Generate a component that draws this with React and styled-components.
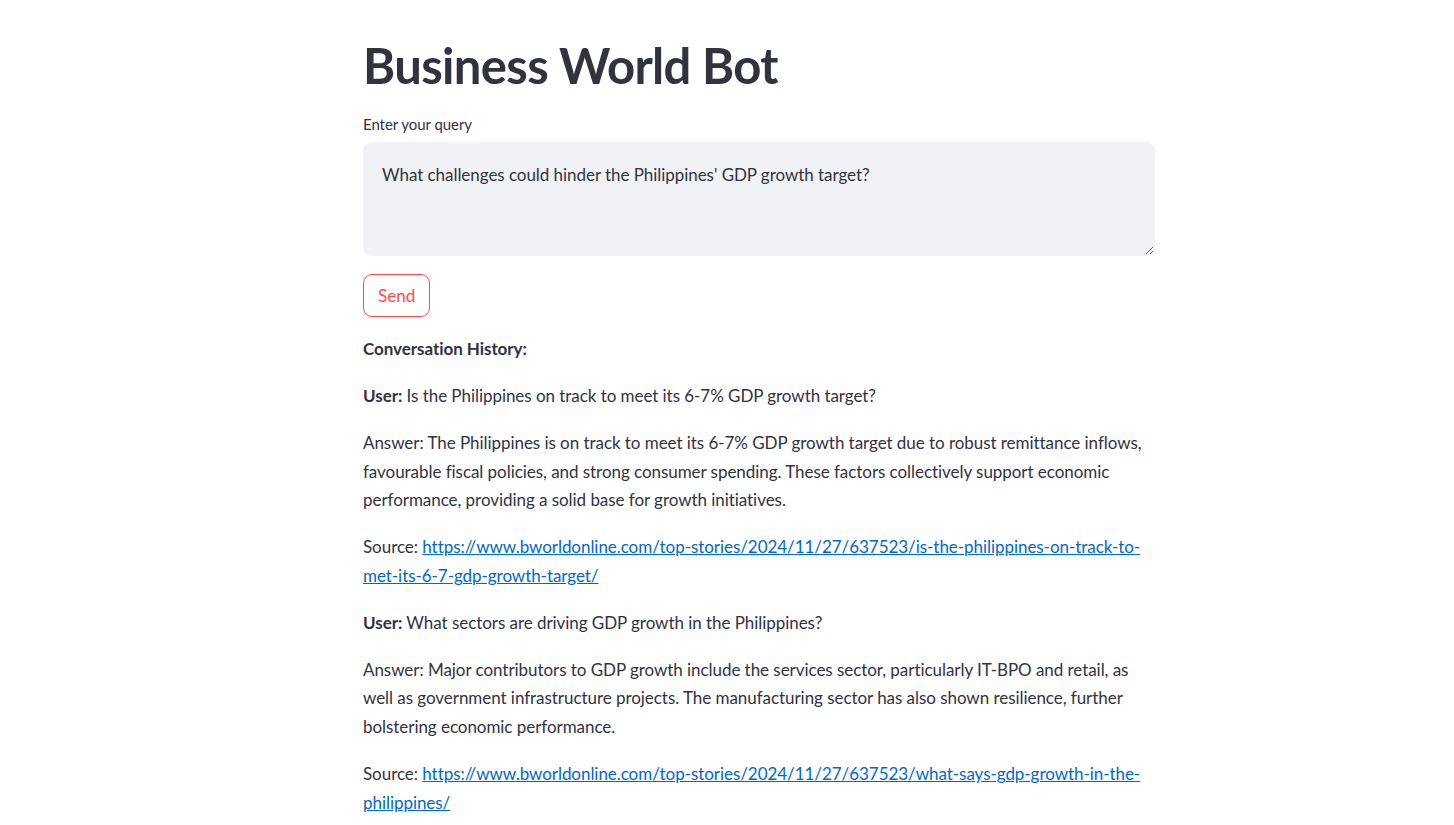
import React from "react";
import styled, { createGlobalStyle } from "styled-components";

const GlobalStyle = createGlobalStyle`
  html, body {
    margin: 0;
    padding: 0;
    background: #ffffff;
    color: #31333F;
    font-family: "Lato", "Liberation Sans", sans-serif;
  }
  * { box-sizing: border-box; }
`;

const Main = styled.main`
  width: 792px;
  margin-left: 363px;
  padding-top: 35.5px;
  padding-bottom: 60px;
  display: flex;
  flex-direction: column;
  gap: 18px;
`;

const Title = styled.h1`
  margin: 0;
  font-family: "Lato", sans-serif;
  font-weight: 700;
  font-size: 49px;
  line-height: 1.2;
  color: #31333F;
  letter-spacing: -0.65px;
`;

const Field = styled.div`
  display: flex;
  flex-direction: column;
`;

const Label = styled.label`
  font-size: 15px;
  line-height: 25px;
  margin-bottom: 5px;
  color: #31333F;
  letter-spacing: -0.05px;
`;

const TextArea = styled.textarea`
  width: 100%;
  height: 114px;
  padding: 18px 18px 16px 18px;
  border: 1px solid transparent;
  border-radius: 9px;
  background: #F0F2F6;
  color: #31333F;
  font-family: "Lato", sans-serif;
  font-size: 17px;
  line-height: 28.8px;
  letter-spacing: -0.05px;
  resize: vertical;
  outline: none;
`;

const SendButton = styled.button`
  align-self: flex-start;
  height: 43px;
  padding: 0 14px;
  border: 1px solid rgb(255, 75, 75);
  border-radius: 9px;
  background: #ffffff;
  color: rgb(255, 75, 75);
  font-family: "Lato", sans-serif;
  font-size: 17px;
  line-height: 1;
  cursor: pointer;
`;

const History = styled.div`
  font-size: 17px;
  line-height: 28.8px;
  letter-spacing: -0.05px;
  color: #31333F;
`;

const Para = styled.p`
  margin: 0 0 18px 0;
  &:last-child { margin-bottom: 0; }
`;

const Strong = styled.strong`
  font-weight: 700;
`;

const Link = styled.a`
  color: rgb(0, 104, 201);
  text-decoration: underline;
`;

const conversation = [
  {
    q: "Is the Philippines on track to meet its 6-7% GDP growth target?",
    a: "The Philippines is on track to meet its 6-7% GDP growth target due to robust remittance inflows, favourable fiscal policies, and strong consumer spending. These factors collectively support economic performance, providing a solid base for growth initiatives.",
    src: "https://www.bworldonline.com/top-stories/2024/11/27/637523/is-the-philippines-on-track-to-met-its-6-7-gdp-growth-target/",
  },
  {
    q: "What sectors are driving GDP growth in the Philippines?",
    a: "Major contributors to GDP growth include the services sector, particularly IT-BPO and retail, as well as government infrastructure projects. The manufacturing sector has also shown resilience, further bolstering economic performance.",
    src: "https://www.bworldonline.com/top-stories/2024/11/27/637523/what-says-gdp-growth-in-the-philippines/",
  },
];

export default function App() {
  return (
    <>
      <GlobalStyle />
      <Main>
        <Title>Business World Bot</Title>
        <Field>
          <Label htmlFor="query">Enter your query</Label>
          <TextArea
            id="query"
            defaultValue="What challenges could hinder the Philippines' GDP growth target?"
          />
        </Field>
        <SendButton type="button">Send</SendButton>
        <History>
          <Para>
            <Strong>Conversation History:</Strong>
          </Para>
          {conversation.map((c, i) => (
            <React.Fragment key={i}>
              <Para>
                <Strong>User:</Strong> {c.q}
              </Para>
              <Para>Answer: {c.a}</Para>
              <Para>
                Source: <Link href={c.src}>{c.src}</Link>
              </Para>
            </React.Fragment>
          ))}
        </History>
      </Main>
    </>
  );
}
